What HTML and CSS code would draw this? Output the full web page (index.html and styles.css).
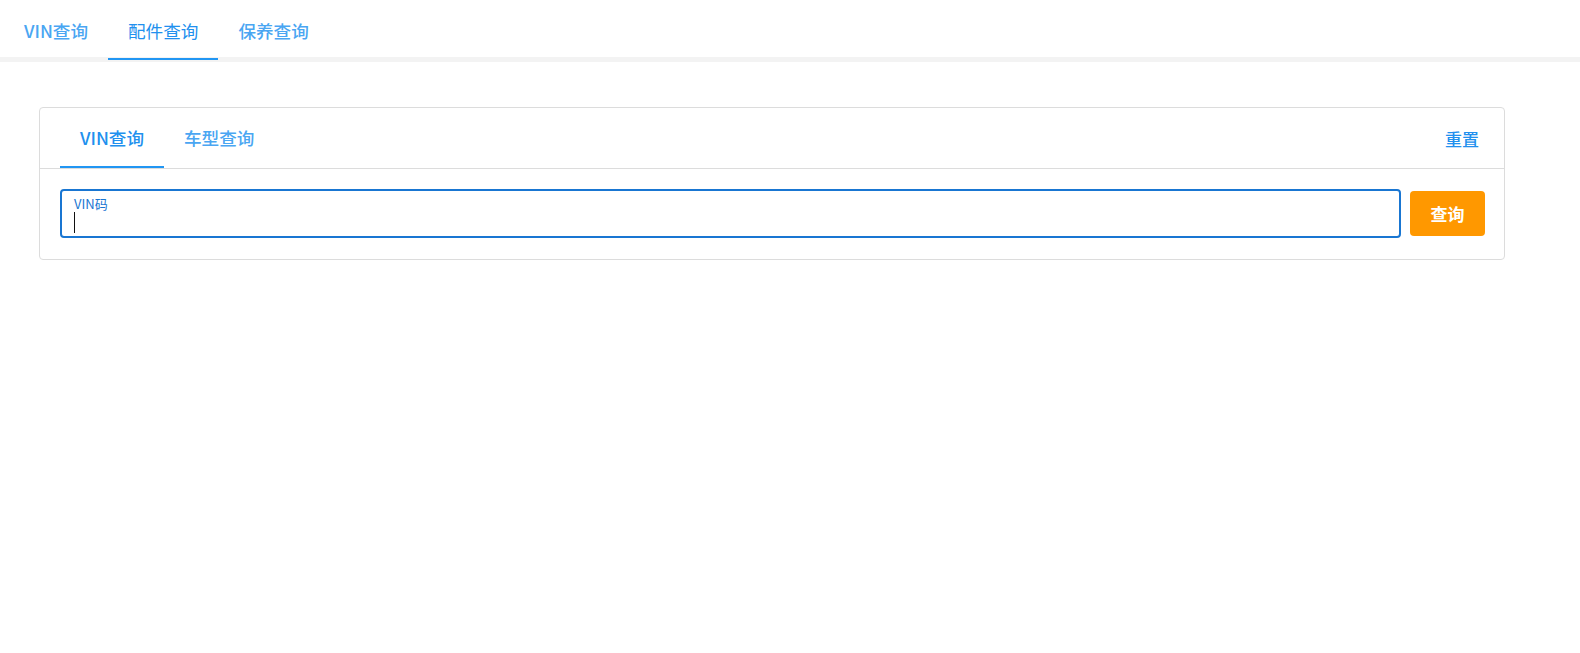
FILE: index.html
```html
<!DOCTYPE html>
<html lang="zh-CN">
<head>
    <meta charset="UTF-8">
    <meta name="viewport" content="width=device-width, initial-scale=1.0">
    <title>配件查询</title>
    <link rel="stylesheet" href="styles.css">
</head>
<body>
    <nav class="top-tabs">
        <a class="top-tab">VIN查询</a>
        <a class="top-tab active">配件查询</a>
        <a class="top-tab">保养查询</a>
    </nav>

    <div class="card">
        <div class="card-head">
            <div class="card-tabs">
                <a class="card-tab active">VIN查询</a>
                <a class="card-tab">车型查询</a>
            </div>
            <a class="reset">重置</a>
        </div>
        <div class="card-body">
            <div class="field">
                <label class="field-label">VIN码</label>
                <span class="caret"></span>
            </div>
            <button class="search-btn">查询</button>
        </div>
    </div>
</body>
</html>
```

FILE: styles.css
```css
body {
    margin: 0;
    font-family: "Noto Sans CJK SC", "Noto Sans", sans-serif;
    background: #fff;
}
a { cursor: pointer; }

.top-tabs {
    display: flex;
    height: 57px;
    padding-left: 4px;
    border-bottom: 5px solid #f3f3f3;
}
.top-tab {
    position: relative;
    padding: 2px 20px 0;
    line-height: 57px;
    font-size: 17.6px;
    font-weight: 500;
    color: #4aa6f2;
}
.top-tab.active {
    color: #2190ee;
    font-weight: 400;
}
.top-tab.active::after {
    content: "";
    position: absolute;
    left: 0;
    right: 0;
    top: 58px;
    height: 2px;
    background: #2196f3;
}

.card {
    margin: 45px 75px 0 39px;
    border: 1px solid #dcdcdc;
    border-radius: 4px;
}
.card-head {
    display: flex;
    justify-content: space-between;
    align-items: center;
    height: 60px;
    padding: 0 25px 0 20px;
    border-bottom: 1px solid #dcdcdc;
}
.card-tabs {
    display: flex;
    height: 100%;
}
.card-tab {
    position: relative;
    padding: 0 20px;
    line-height: 60px;
    font-size: 17.6px;
    font-weight: 500;
    color: #4aa6f2;
}
.card-tab.active { color: #2190ee; }
.card-tab.active::after {
    content: "";
    position: absolute;
    left: 0;
    right: 0;
    bottom: 0;
    height: 2px;
    background: #2196f3;
}
.reset {
    font-size: 17px;
    font-weight: 500;
    color: #2190ee;
}

.card-body {
    display: flex;
    align-items: center;
    gap: 9px;
    padding: 20px 19px 21px 20px;
}
.field {
    flex: 1;
    height: 49px;
    box-sizing: border-box;
    border: 2px solid #1976d2;
    border-radius: 4px;
    padding: 5px 12px 0;
    display: flex;
    flex-direction: column;
}
.field-label {
    font-size: 13px;
    line-height: 16px;
    color: #1976d2;
}
.caret {
    width: 1px;
    height: 21px;
    background: #111;
}
.search-btn {
    width: 75px;
    height: 45px;
    border: none;
    border-radius: 4px;
    background: #ff9800;
    color: #fff;
    font-family: inherit;
    font-size: 17px;
    font-weight: 700;
    cursor: pointer;
}
```
